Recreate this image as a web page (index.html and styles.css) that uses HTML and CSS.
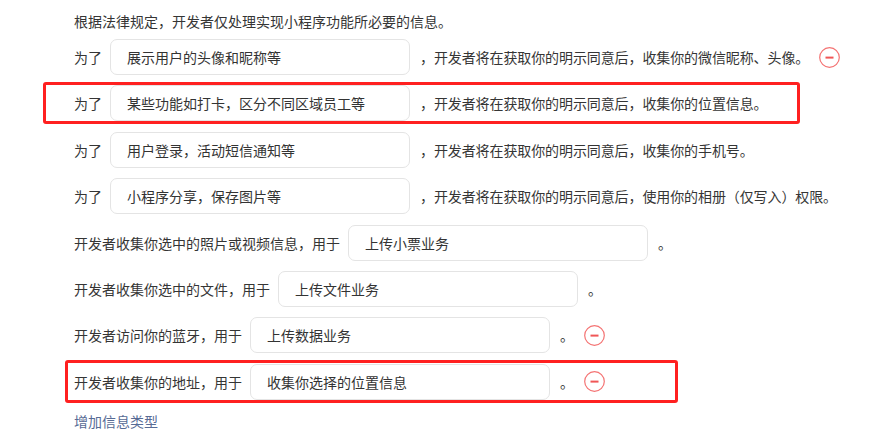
FILE: index.html
```html
<!DOCTYPE html>
<html lang="zh-CN">
<head>
  <meta charset="UTF-8" />
  <meta name="viewport" content="width=device-width, initial-scale=1.0"/>
  <title>用户隐私保护指引</title>
  <link rel="stylesheet" href="styles.css">
</head>
<body>
  <div class="privacy">
    <p class="intro">根据法律规定，开发者仅处理实现小程序功能所必要的信息。</p>

    <!-- 为了...的几行 -->
    <div class="row">
      <span class="label">为了</span>
      <div class="field">展示用户的头像和昵称等</div>
      <span class="tail">，开发者将在获取你的明示同意后，收集你的微信昵称、头像。</span>
      <span class="remove"><svg width="21" height="21" viewBox="0 0 21 21"><circle cx="10.5" cy="10.5" r="9.8" fill="none" stroke="#f47373" stroke-width="1.2"/><rect x="6.5" y="9.6" width="8" height="2" fill="#f05656"/></svg></span>
    </div>
    <div class="row">
      <span class="mark mark-top"></span>
      <span class="label">为了</span>
      <div class="field">某些功能如打卡，区分不同区域员工等</div>
      <span class="tail">，开发者将在获取你的明示同意后，收集你的位置信息。</span>
    </div>
    <div class="row">
      <span class="label">为了</span>
      <div class="field">用户登录，活动短信通知等</div>
      <span class="tail">，开发者将在获取你的明示同意后，收集你的手机号。</span>
    </div>
    <div class="row">
      <span class="label">为了</span>
      <div class="field">小程序分享，保存图片等</div>
      <span class="tail">，开发者将在获取你的明示同意后，使用你的相册（仅写入）权限。</span>
    </div>

    <!-- 用于...的几行 -->
    <div class="row">
      <span class="label">开发者收集你选中的照片或视频信息，用于</span>
      <div class="field">上传小票业务</div>
      <span class="tail">。</span>
    </div>
    <div class="row">
      <span class="label">开发者收集你选中的文件，用于</span>
      <div class="field">上传文件业务</div>
      <span class="tail">。</span>
    </div>
    <div class="row">
      <span class="label">开发者访问你的蓝牙，用于</span>
      <div class="field">上传数据业务</div>
      <span class="tail">。</span>
      <span class="remove"><svg width="21" height="21" viewBox="0 0 21 21"><circle cx="10.5" cy="10.5" r="9.8" fill="none" stroke="#f47373" stroke-width="1.2"/><rect x="6.5" y="9.6" width="8" height="2" fill="#f05656"/></svg></span>
    </div>
    <div class="row">
      <span class="mark mark-bottom"></span>
      <span class="label">开发者收集你的地址，用于</span>
      <div class="field">收集你选择的位置信息</div>
      <span class="tail">。</span>
      <span class="remove"><svg width="21" height="21" viewBox="0 0 21 21"><circle cx="10.5" cy="10.5" r="9.8" fill="none" stroke="#f47373" stroke-width="1.2"/><rect x="6.5" y="9.6" width="8" height="2" fill="#f05656"/></svg></span>
    </div>

    <a class="add" href="#">增加信息类型</a>
  </div>
</body>
</html>
```

FILE: styles.css
```css
body {
  margin: 0;
  background: #fff;
  font-family: "Noto Sans CJK SC", "Noto Sans", sans-serif;
  font-size: 14px;
  color: #353535;
}
.privacy {
  padding: 11px 0 0 74px;
  display: flex;
  flex-direction: column;
  align-items: flex-start;
}
.intro {
  margin: 0 0 8px;
  line-height: 20px;
}
.row {
  position: relative;
  display: flex;
  align-items: center;
  gap: 10px;
  height: 36px;
  margin-bottom: 10.4px;
}
.label,
.tail {
  white-space: nowrap;
  line-height: 20px;
}
.label {
  margin-right: -2px;
}
.tail {
  letter-spacing: -0.1px;
}
.field {
  box-sizing: border-box;
  width: 300px;
  height: 36px;
  padding: 0 16px;
  border: 1px solid #e4e4e4;
  border-radius: 7px;
  line-height: 34px;
  color: #333;
  white-space: nowrap;
}
.remove {
  display: flex;
  width: 21px;
  height: 21px;
}

/* 红框标注 */
.mark {
  position: absolute;
  box-sizing: border-box;
  border: 3px solid #ff2020;
  border-radius: 3px;
  pointer-events: none;
}
.mark-top {
  left: -31px;
  top: -3px;
  width: 757px;
  height: 42px;
}
.mark-bottom {
  left: -9px;
  top: -4px;
  width: 613px;
  height: 43px;
}
.add {
  margin-top: 1px;
  line-height: 20px;
  color: #576b95;
  text-decoration: none;
}
```
